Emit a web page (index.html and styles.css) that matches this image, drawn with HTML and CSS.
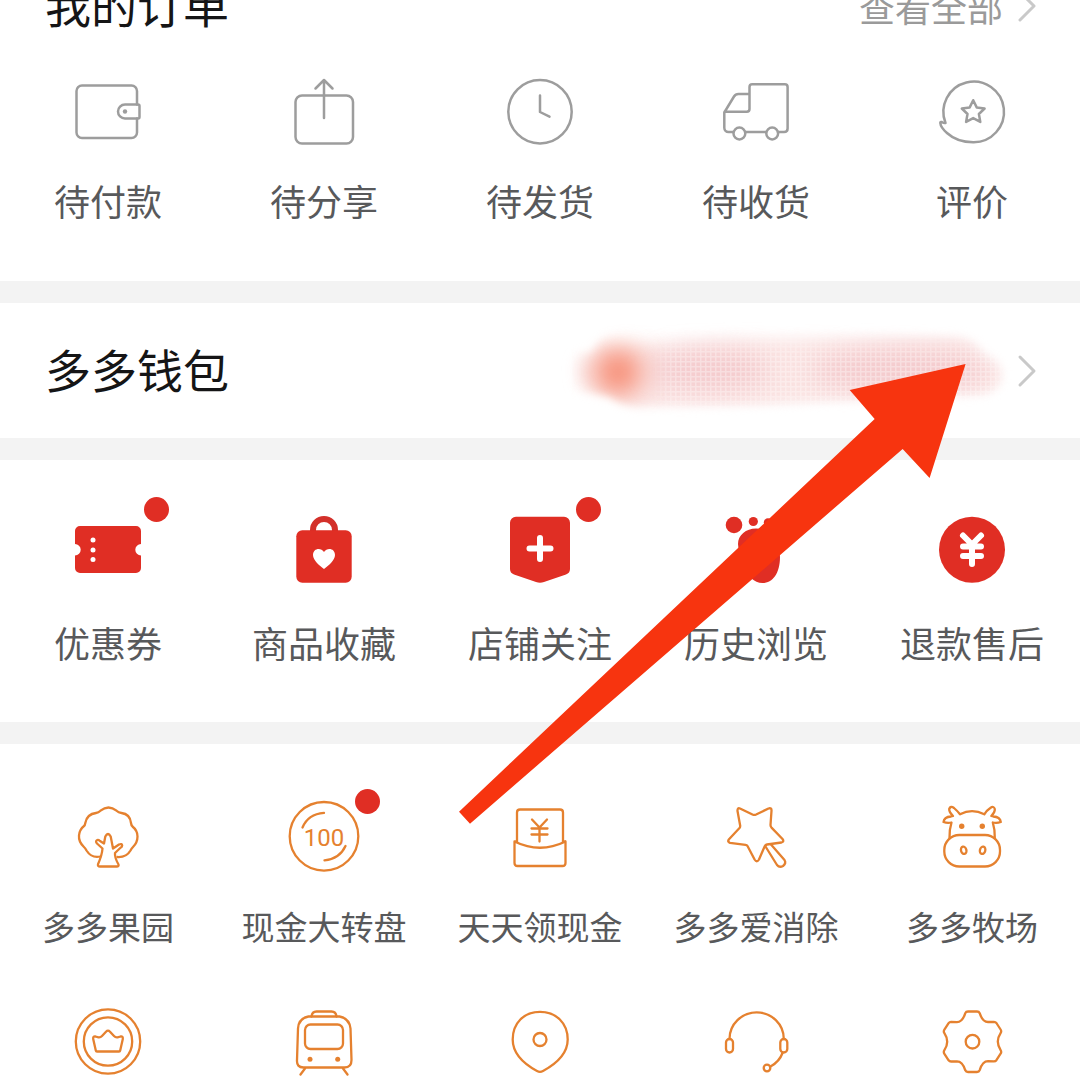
FILE: index.html
```html
<!DOCTYPE html>
<html lang="zh-CN">
<head>
<meta charset="UTF-8" />
<meta name="viewport" content="width=device-width, initial-scale=1" />
<title>个人中心</title>
<link rel="stylesheet" href="styles.css">
</head>
<body>

<main>
  <section class="orders">
    <header>
      <h2>我的订单</h2>
      <a href="#orders" class="more">查看全部
        <svg class="chevron" viewBox="0 0 20 34"><path d="M3 3l14 14L3 31"/></svg>
      </a>
    </header>
    <ul class="grid gray">
      <li><a href="#pay">
        <span class="icon">
          <svg viewBox="0 0 72 72">
            <path d="M65 28.500V15a5.500 5.500 0 0 0-5.500-5.500H10A5.500 5.500 0 0 0 4.500 15v41.500A5.500 5.500 0 0 0 10 62h49.500a5.500 5.500 0 0 0 5.500-5.500v-14"/>
            <path d="M53 28.500h13q1.500 0 1.500 1.500v11q0 1.500-1.500 1.500H53a7 7 0 0 1 0-14z"/>
            <circle class="dot" cx="53" cy="35.500" r="2.200"/>
          </svg>
        </span>
        待付款
      </a></li>
      <li><a href="#share">
        <span class="icon">
          <svg viewBox="0 0 72 72">
            <rect x="7.500" y="19.500" width="57.500" height="48" rx="6.500"/>
            <path d="M36 4v38M27.500 12.500L36 4l8.500 8.500"/>
          </svg>
        </span>
        待分享
      </a></li>
      <li><a href="#ship">
        <span class="icon">
          <svg viewBox="0 0 72 72">
            <circle cx="36" cy="35.700" r="31.700"/>
            <path d="M36 19.500v16.500l9.500 4.700"/>
          </svg>
        </span>
        待发货
      </a></li>
      <li><a href="#receive">
        <span class="icon">
          <svg viewBox="0 0 72 72">
            <path d="M13 56H8.500a4.200 4.200 0 0 1-4.200-4.200V36.500L14 20.500q1.500-2.500 4.500-2.500h11V11q0-2.700 2.700-2.700h32.600q2.800 0 2.800 2.700v41.500q0 3.500-3.500 3.500H58M46 56H25.500M29.500 18v15q0 2.700-2.700 2.700H4.500"/>
            <circle cx="19.400" cy="57.500" r="5.900"/>
            <circle cx="52.200" cy="57.500" r="5.900"/>
          </svg>
        </span>
        待收货
      </a></li>
      <li><a href="#review">
        <span class="icon">
          <svg viewBox="0 0 72 72">
            <path d="M9.500 47A30.300 30.300 0 1 1 37.200 66.200C27 66.200 17 62.500 11 57 7 53.500 4.500 50 4.300 47q-.2-1.500 1.500-1 2 1.300 3.700 1z"/>
            <path d="M37.200 24.200l3.500 7.200 7.900 1.100-5.700 5.500 1.400 7.900-7.100-3.800-7.100 3.800 1.400-7.900-5.700-5.500 7.900-1.100z"/>
          </svg>
        </span>
        评价
      </a></li>
    </ul>
  </section>

  <section class="wallet">
    <a href="#wallet">
      <h2>多多钱包</h2>
      <svg class="balance" viewBox="0 0 464 110">
        <defs>
          <filter id="edge" x="-20%" y="-40%" width="140%" height="180%"><feGaussianBlur stdDeviation="4"/></filter>
          <filter id="soft" x="-20%" y="-40%" width="140%" height="180%"><feGaussianBlur stdDeviation="8"/></filter>
          <filter id="softer" x="-50%" y="-80%" width="200%" height="260%"><feGaussianBlur stdDeviation="13"/></filter>
          <pattern id="mesh" width="5" height="5" patternUnits="userSpaceOnUse">
            <path d="M0 0h5M0 0v5"/>
          </pattern>
          <mask id="area"><path class="shape" d="M44 28Q50 14 80 11L200 9 400 16Q426 17 436 35 456 42 456 60 454 80 430 82L370 84 210 92 90 94Q70 92 58 82L14 76V34L40 34Z"/></mask>
          <mask id="fade"><rect class="shape wide" x="112" y="28" width="340" height="62"/></mask>
        </defs>
        <g mask="url(#area)">
          <path class="haze" d="M46 30L190 24 410 22Q430 26 432 40 452 44 452 60 450 78 430 80L340 84 220 90 80 92 60 84 30 70 28 44 42 40Z"/>
          <ellipse class="pink" cx="160" cy="54" rx="60" ry="20"/>
          <ellipse class="pink" cx="350" cy="54" rx="90" ry="20"/>
          <circle class="coral" cx="68" cy="56" r="23"/>
          <g mask="url(#fade)"><rect class="mesh" x="80" y="4" width="384" height="100"/></g>
        </g>
      </svg>
      <svg class="chevron" viewBox="0 0 20 34"><path d="M3 3l14 14L3 31"/></svg>
    </a>
  </section>

  <section class="tools">
    <ul class="grid red">
      <li><a href="#coupon">
        <span class="icon">
          <svg viewBox="0 0 72 72">
            <path d="M8 12h56a5 5 0 0 1 5 5v13a5.700 5.700 0 0 0 0 11.400V54a5 5 0 0 1-5 5H8a5 5 0 0 1-5-5V41.400A5.700 5.700 0 0 0 3 30V17a5 5 0 0 1 5-5z"/>
            <g class="hole"><circle cx="21" cy="26" r="2.500"/><circle cx="21" cy="36" r="2.500"/><circle cx="21" cy="45.500" r="2.500"/></g>
          </svg>
          <i class="badge"></i>
        </span>
        优惠券
      </a></li>
      <li><a href="#favorites">
        <span class="icon">
          <svg viewBox="0 0 72 72">
            <path class="handle" d="M25 19v-3a11 11 0 0 1 22 0v3"/>
            <rect x="8.300" y="16.300" width="55.400" height="52.400" rx="6"/>
            <path class="hole" d="M36 55C32 52 25 46.500 25 41c0-7 8-8 11-3 3-5 11-4 11 3 0 5.500-7 11-11 14z"/>
          </svg>
        </span>
        商品收藏
      </a></li>
      <li><a href="#shops">
        <span class="icon">
          <svg viewBox="0 0 72 72">
            <path d="M12 2.700h48a6 6 0 0 1 6 6V55q0 4-4 5.500l-22 7.500q-4 1.400-8 0L10 60.500Q6 59 6 55V8.700a6 6 0 0 1 6-6z"/>
            <path class="mark" d="M36 24v21M25.500 34.500h21"/>
          </svg>
          <i class="badge"></i>
        </span>
        店铺关注
      </a></li>
      <li><a href="#history">
        <span class="icon">
          <svg viewBox="0 0 72 72">
            <circle cx="14" cy="11" r="8.300"/>
            <circle cx="33.300" cy="7.500" r="4.600"/>
            <circle cx="48" cy="8.500" r="4.200"/>
            <circle cx="58" cy="15" r="4"/>
            <path d="M18 30c0-9 8-15.500 18-15.500C50 14.500 60 25 60 43c0 16-7 26-17.500 26C34 69 27 62 27 54c0-9-9-14-9-24z"/>
          </svg>
        </span>
        历史浏览
      </a></li>
      <li><a href="#refund">
        <span class="icon">
          <svg viewBox="0 0 72 72">
            <circle cx="36" cy="35.700" r="33"/>
            <path class="yen" d="M27 21.500l9 9 9-9M36 30.500V50M27 32.500h18M27 42h18"/>
          </svg>
        </span>
        退款售后
      </a></li>
    </ul>
  </section>

  <section class="services">
    <ul class="grid orange">
      <li><a href="#orchard">
        <span class="icon">
          <svg viewBox="0 0 72 72">
            <path d="M28.500 56.500q-9 2-14-6-1-2-3-4-5-5-4.500-11 .5-6 5-9.500 1-.8 1.300-3Q15 14 24 13q2.500-.3 4.500-2.300 8-6.500 16 0 2 2 5 2.300 8.500 1 9.500 10 .2 2.200 1.500 3.500 5 4 5 10 0 6-4.500 10.500-1.500 1.500-2.500 3.500-4 7-13 6.500"/>
            <path d="M28 66.500q-2.500 0-2-2.300 4-9 4.500-15.700l-5.500-5q-2-2.500.3-3.500 1.200-.4 2.700 1l4 2.500 1.300-7q2.700-5 5.400 0L41 48.500l6-4q3-1.300 3.200 1 0 1.500-2 2.500L43 53q-.5 4.500 3.500 11.500.5 2-1.700 2z"/>
          </svg>
        </span>
        多多果园
      </a></li>
      <li><a href="#wheel">
        <span class="icon">
          <svg viewBox="0 0 72 72">
            <circle cx="36" cy="36.300" r="34.300"/>
            <path d="M14.500 27.500Q20 14 36 12.800M57.500 46Q51.500 59 36.500 60.300"/>
            <text x="36" y="46">100</text>
          </svg>
          <i class="badge near"></i>
        </span>
        现金大转盘
      </a></li>
      <li><a href="#cash">
        <span class="icon">
          <svg viewBox="0 0 72 72">
            <path d="M13 42V12.500q0-3 3-3h40q3 0 3 3V42"/>
            <path d="M10.500 41.500q25.500 12.500 51 0V63q0 3-3 3h-45q-3 0-3-3zM10.500 41.500H13M61.500 41.500H59"/>
            <path d="M28 19.500l7.500 8 7.500-8M35.500 27.500v14M27.500 28.500h16M27.500 34.500h16"/>
          </svg>
        </span>
        天天领现金
      </a></li>
      <li><a href="#match">
        <span class="icon">
          <svg viewBox="0 0 72 72">
            <path d="M20 8.500L32.500 14.500q1.800.8 3.600 0L48.500 8.500q3.200-1 3 2.200L50.500 25q0 1.500 1 2.600L62.500 39q2 2.800-1 3.500L47 44.500q-1.500.3-2.300 1.800L39 59.500q-2.200 3.500-4.400 0L27.500 46q-.6-1-2-1.200L10 42.800q-3-1-1-3.600L19.500 28q.8-1 .7-2.200L17.500 11q-.2-3.500 2.500-2.500z"/>
            <path d="M45.500 46.500l11.500 18.500q2.500 3 6 1 3.500-2.800 1.500-6L51 44.500"/>
          </svg>
        </span>
        多多爱消除
      </a></li>
      <li><a href="#ranch">
        <span class="icon">
          <svg viewBox="0 0 72 72">
            <rect x="8.300" y="35" width="55.700" height="31.500" rx="15"/>
            <path d="M13.500 38q-.3-8 2-15.500-4 1-8-.5.500-5 7.500-5.500l2-.5q-4-4-3.800-7 1.300-3.500 4.800-1 3.500 3 6 6.300 12-6.500 24.300 0 2.500-4 6-6.300 3.500-2.500 4.500 1 .3 3-3.500 7l2 .5q7 .5 7.500 5.500-4 1.500-8 .5 2.300 7.500 2 15.500"/>
            <circle class="dot" cx="25.700" cy="26.300" r="2.700"/><circle class="dot" cx="46.300" cy="26.300" r="2.700"/>
            <ellipse cx="27.700" cy="50.300" rx="2.700" ry="3.700" transform="rotate(-15 27.700 50.300)"/>
            <ellipse cx="46.600" cy="50.300" rx="2.700" ry="3.700" transform="rotate(15 46.600 50.300)"/>
          </svg>
        </span>
        多多牧场
      </a></li>
      <li><a href="#member" aria-label="会员">
        <span class="icon">
          <svg viewBox="0 0 72 72">
            <circle cx="36" cy="36.500" r="32.200"/>
            <circle cx="36" cy="36.500" r="24.200"/>
            <path d="M25 46.500q-1 0-1.200-1L21.200 34q-.3-3 2.300-2.500l3 .8q2 .3 3.500-1.300l4-4.300q2-2.200 4 0l4 4.300q1.500 1.600 3.500 1.300l3-.8q2.600-.5 2.300 2.500l-2.600 11.500q-.2 1-1.200 1z"/>
          </svg>
        </span>
      </a></li>
      <li><a href="#train" aria-label="火车票">
        <span class="icon">
          <svg viewBox="0 0 72 72">
            <path d="M20.500 11.500h31q10 2 11 12L63.500 55q0 7.500-7 7.500h-41q-7 0-6.500-7.500L10 23.500q.5-10 10.500-12z"/>
            <path d="M23.500 11.500q.5-5 5-5h15q4.500 0 5 5M17 63.500L12.500 69.500M55 63.500l4.500 6"/>
            <rect x="17" y="19.500" width="38" height="24.500" rx="5.500"/>
            <circle class="dot" cx="22" cy="54.300" r="2.500"/><circle class="dot" cx="49.700" cy="54.300" r="2.500"/>
          </svg>
        </span>
      </a></li>
      <li><a href="#address" aria-label="收货地址">
        <span class="icon">
          <svg viewBox="0 0 72 72">
            <path d="M36 6.800C52 6.800 63.700 18 63.700 34.500 63.700 50 50 60 39 66q-3 1.600-6 0C22 60 8.700 50 8.700 34.500 8.700 18 20 6.800 36 6.800z"/>
            <circle cx="36" cy="34.500" r="6.500"/>
          </svg>
        </span>
      </a></li>
      <li><a href="#support" aria-label="官方客服">
        <span class="icon">
          <svg viewBox="0 0 72 72">
            <path d="M9.500 34a27 26.500 0 0 1 54.300 0M62.500 48q-3 8.500-12 13.500"/>
            <rect x="6" y="34" width="7" height="13.500" rx="3.500"/>
            <rect x="60.300" y="34" width="7" height="13.500" rx="3.500"/>
            <circle cx="47" cy="63" r="3.300"/>
          </svg>
        </span>
      </a></li>
      <li><a href="#settings" aria-label="设置">
        <span class="icon">
          <svg viewBox="0 0 72 72">
            <path d="M32 6.500h9q2 0 2.700 1.700Q46.500 17 52 17l6-.2q1.500 0 2.400 1.200l4.200 6.500q1.200 1.800 0 3.600-5.600 8.500 0 17 1.200 1.800 0 3.600l-4.200 6.500q-.9 1.200-2.400 1.200l-6-.2q-5.500 0-8.300 9Q43 67 41 67h-9q-2 0-2.700-1.700-2.800-9-8.300-9l-6 .2q-1.500 0-2.400-1.200l-4.200-6.500q-1.200-1.800 0-3.600 5.600-8.500 0-17-1.200-1.800 0-3.600l4.200-6.500q.9-1.200 2.400-1.200l6 .2q5.500 0 8.300-9Q30 6.500 32 6.500z"/>
            <circle cx="36.500" cy="36.700" r="6.800"/>
          </svg>
        </span>
      </a></li>
    </ul>
  </section>

  <!-- Seta apontando para a carteira -->
  <svg class="arrow" viewBox="0 0 508 460"><path d="M507 0L471 114 444 85 11 460 0 448 416 55 391 26z"/></svg>
</main>

</body>
</html>
```
FILE: styles.css
```css
* {
  box-sizing: border-box;
}
body {
  font-family: 'Noto Sans CJK SC', 'Noto Sans', sans-serif;
  background: #fff;
  margin: 0;
  color: #58595b;
}
main {
  position: relative;
  display: flow-root;
}
section + section {
  border-top: 22px solid #f3f3f3;
}
h2 {
  margin: 0;
  font-size: 46px;
  line-height: 46px;
  font-weight: 400;
  color: #151516;
  padding-bottom: 6px;
}
a {
  color: inherit;
  text-decoration: none;
}
svg {
  display: block;
}
.chevron {
  width: 20px;
  height: 34px;
  fill: none;
  stroke: #c9c9c9;
  stroke-width: 3;
  stroke-linecap: round;
  stroke-linejoin: round;
}
/* Pedidos */
.orders {
  padding-bottom: 63px;
}
.orders header {
  display: flex;
  justify-content: space-between;
  align-items: center;
  padding: 0 43px 0 45px;
  margin: -20px 0 44px;
}
.more {
  display: flex;
  align-items: center;
  gap: 14px;
  font-size: 36px;
  line-height: 36px;
  color: #9a9a9a;
}
/* Grade de icones */
.grid {
  list-style: none;
  margin: 0;
  padding: 0;
  display: grid;
  grid-template-columns: repeat(5, 1fr);
  row-gap: 62px;
  font-size: 36px;
  line-height: 36px;
}
.grid a {
  display: flex;
  flex-direction: column;
  align-items: center;
  gap: 38px;
  white-space: nowrap;
}
.gray a {
  gap: 34px;
}
.icon {
  position: relative;
}
.icon svg {
  width: 72px;
  height: 72px;
}
.gray svg,
.orange svg {
  fill: none;
  stroke-linecap: round;
  stroke-linejoin: round;
}
.gray svg {
  stroke: #9d9d9d;
  stroke-width: 2.5;
}
.gray .dot {
  fill: #9d9d9d;
  stroke: none;
}
.badge {
  position: absolute;
  left: 72px;
  top: -17px;
  width: 25px;
  height: 25px;
  border-radius: 50%;
  background: #e02e24;
}
.badge.near {
  left: 67px;
  top: -11px;
}
/* Carteira */
.wallet a {
  display: flex;
  align-items: center;
  padding: 13px 43px 12px 45px;
}
.wallet h2 {
  margin-right: auto;
}
.balance {
  width: 464px;
  height: 110px;
  margin-right: 3px;
}
.shape {
  fill: #fff;
  filter: url(#edge);
}
.shape.wide {
  filter: url(#soft);
}
.haze {
  fill: #fae3e2;
  filter: url(#soft);
}
.pink {
  fill: #efb4b9;
  opacity: 0.55;
  filter: url(#softer);
}
.coral {
  fill: #f78e76;
  filter: url(#softer);
}
#mesh path {
  stroke: #fff;
  stroke-width: 3;
  opacity: 0.35;
}
.mesh {
  fill: url(#mesh);
}
/* Ferramentas */
.tools {
  padding: 54px 0 62px;
}
.red svg {
  fill: #e02e24;
}
.red .hole {
  fill: #fff;
}
.red .handle,
.red .mark,
.red .yen {
  fill: none;
  stroke: #fff;
  stroke-width: 6;
  stroke-linecap: round;
  stroke-linejoin: round;
}
.red .handle {
  stroke: #d3302a;
}
/* Servicos */
.services {
  padding-top: 56px;
}
.orange {
  font-size: 33px;
  line-height: 33px;
}
.orange svg {
  stroke: #e5812f;
  stroke-width: 2.3;
}
.orange .dot {
  fill: #e5812f;
  stroke: none;
}
.orange text {
  font-family: Roboto, 'Liberation Sans', sans-serif;
  font-size: 24px;
  text-anchor: middle;
  fill: #e5812f;
  stroke: none;
}
.arrow {
  position: absolute;
  left: 42.5%;
  top: 364px;
  width: 47%;
  fill: #f7340f;
  pointer-events: none;
}
```
